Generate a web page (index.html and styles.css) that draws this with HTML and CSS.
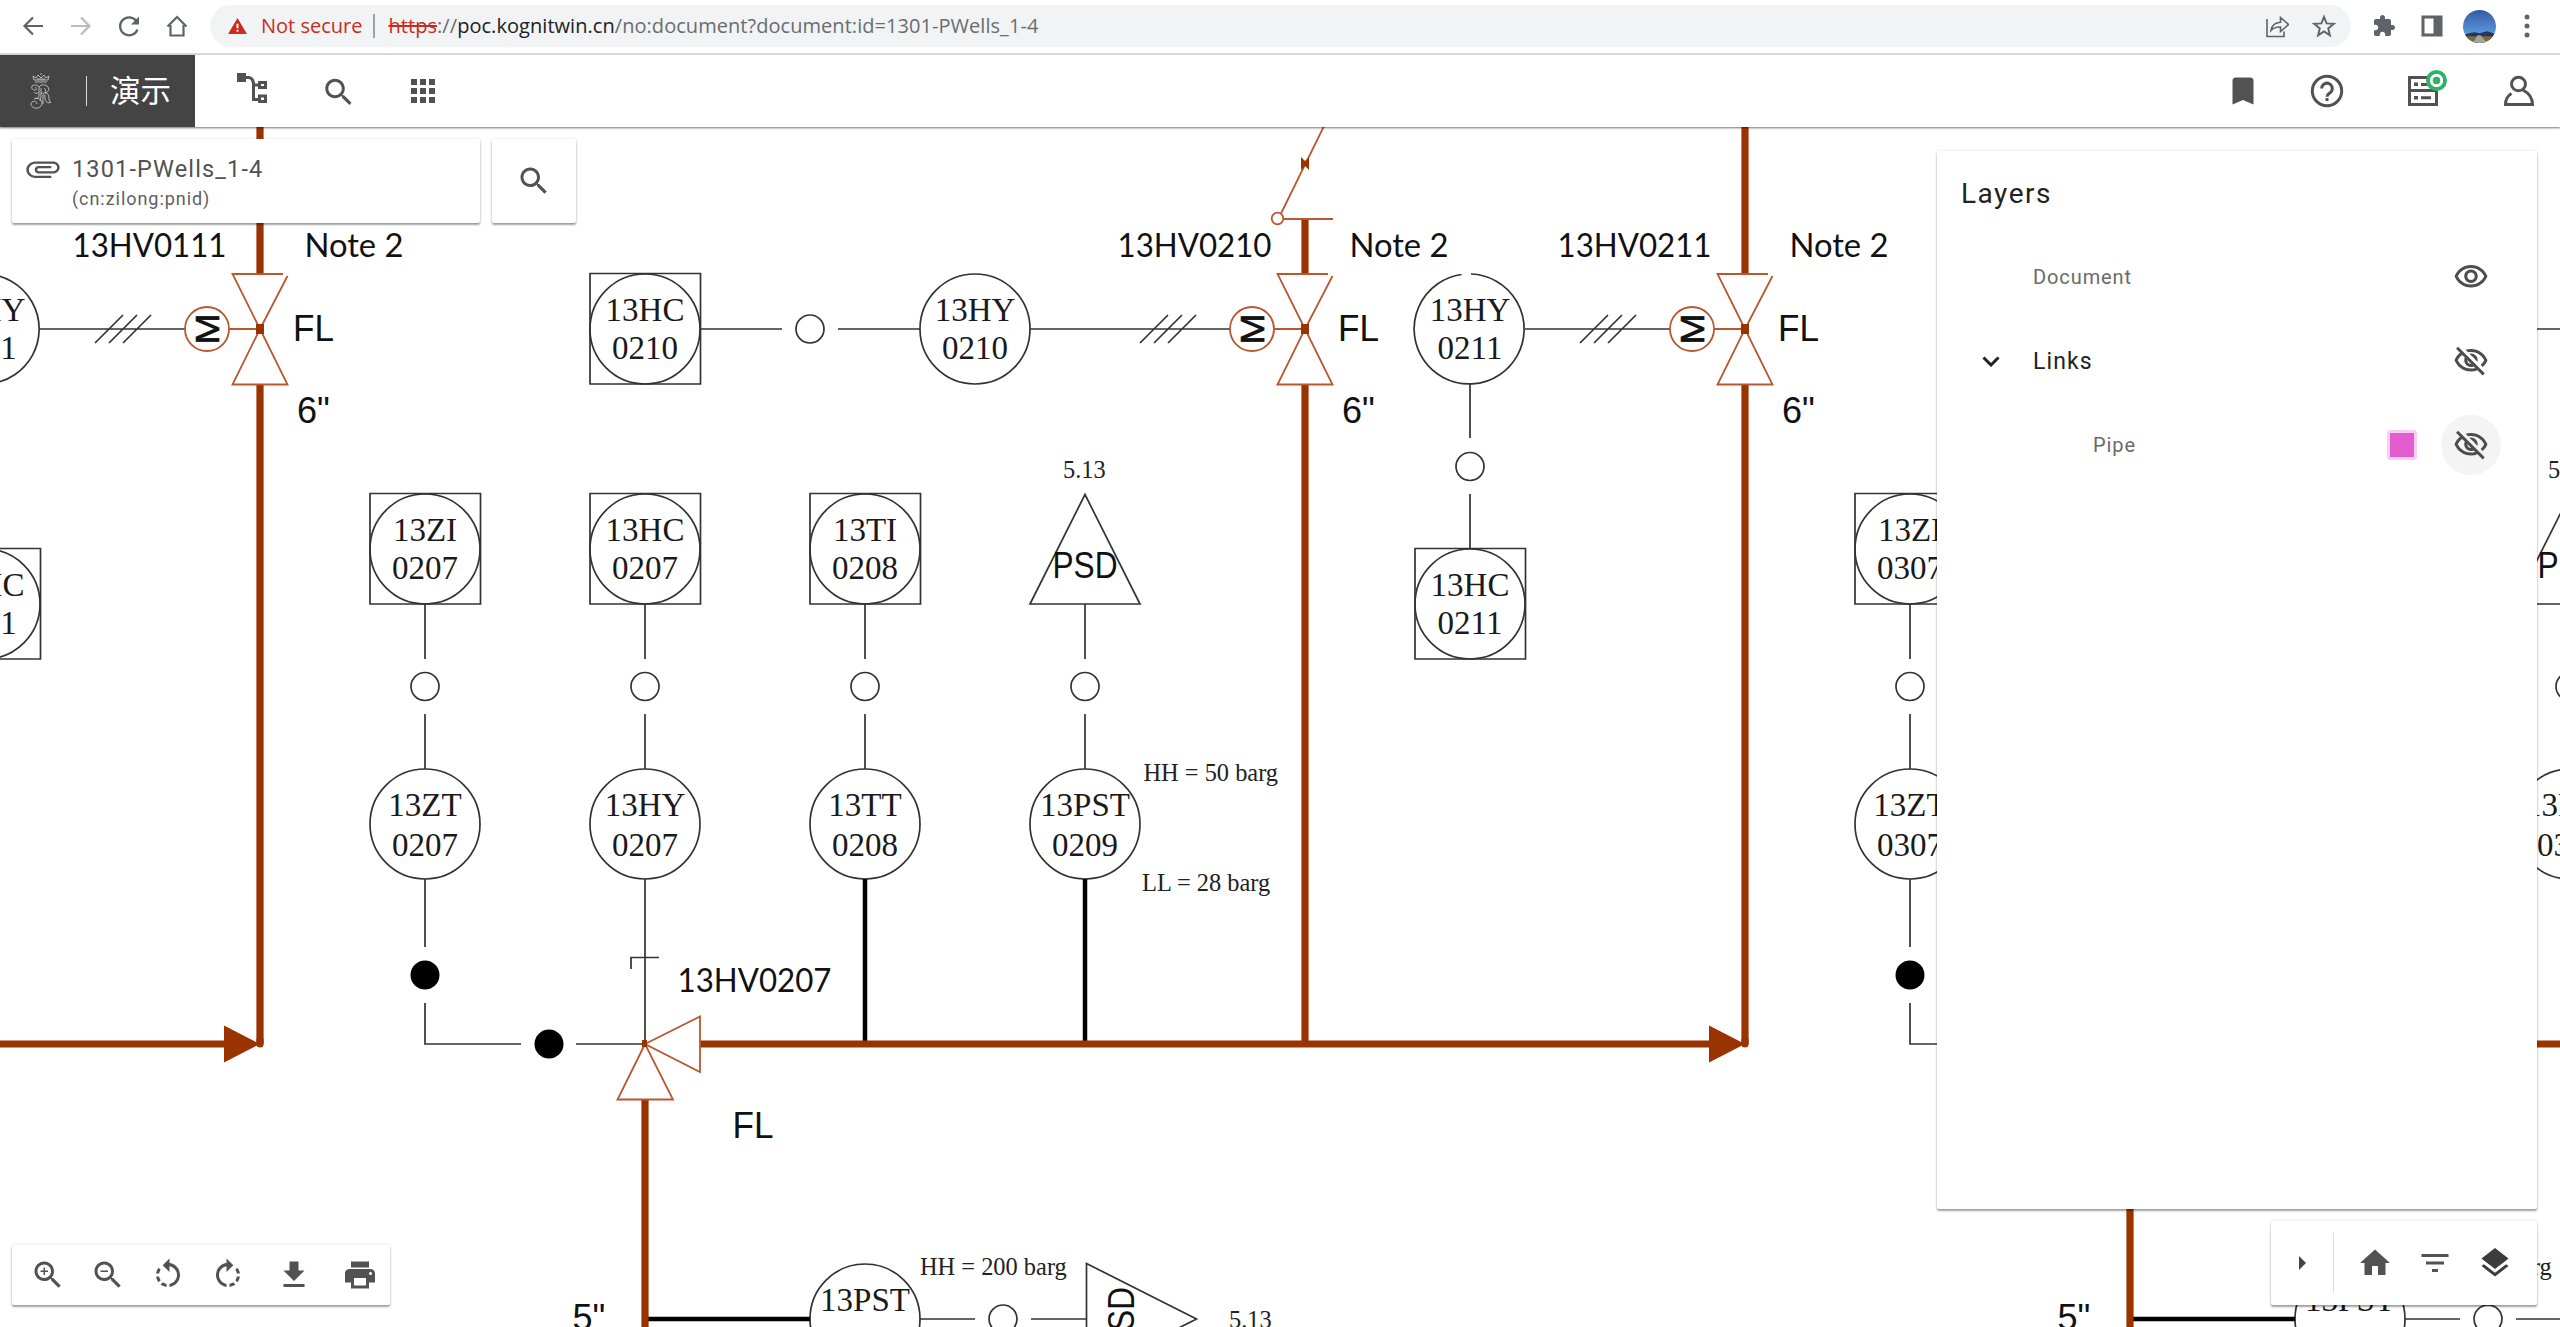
FILE: index.html
```html
<!DOCTYPE html>
<html lang="zh">
<head>
<meta charset="utf-8">
<title>1301-PWells_1-4</title>
<link rel="stylesheet" href="styles.css">
</head>
<body>
<div class="browser-bar">
  <div class="nav-buttons">
    <svg class="nav-icon" viewBox="0 0 24 24"><path d="M22 12H4M12 3.500L3.500 12l8.500 8.500" class="stroke"/></svg>
    <svg class="nav-icon faded" viewBox="0 0 24 24"><path d="M2 12h18M12 3.500l8.500 8.500-8.500 8.500" class="stroke"/></svg>
    <svg class="nav-icon" viewBox="0 0 24 24"><path d="M20.500 15.500A9 9 0 1 1 19 6.500" class="stroke"/><path d="M22 2.500V10.500H14z" class="solid"/></svg>
    <svg class="nav-icon" viewBox="0 0 24 24"><path d="M2.500 12.500L12 3l9.500 9.500M5.500 11V21.500h13V11" class="stroke"/></svg>
  </div>
  <div class="address">
    <svg class="warn-icon" viewBox="0 0 20 17"><path d="M10 0L20 17H0z"/><path d="M9 6h2v5H9zM9 12.500h2v2H9z" fill="#fff"/></svg>
    <span class="not-secure">Not secure</span>
    <span class="address-rule"></span>
    <span class="url"><s>https</s>://<b>poc.kognitwin.cn</b>/no:document?document:id=1301-PWells_1-4</span>
    <span class="address-actions">
      <svg class="nav-icon" viewBox="0 0 24 24"><path d="M2 5v17.500h17v-5M6 16.500c.8-5 4-8 9.500-8.300V3.500l8 7-8 7v-4.500c-4.500-.2-7 .7-9.500 3.500z" class="thin"/></svg>
      <svg class="nav-icon" viewBox="0 0 24 24"><path d="M12 2.800l2.600 6.600 7 .5-5.400 4.500 1.700 6.900-5.900-3.800-5.900 3.800 1.700-6.900-5.400-4.500 7-.5z" class="star"/></svg>
    </span>
  </div>
  <div class="ext-buttons">
    <svg class="nav-icon" viewBox="0 0 24 24"><path class="solid" d="M20.500 11H19V7c0-1.100-.9-2-2-2h-4V3.500C13 2.120 11.880 1 10.500 1S8 2.120 8 3.500V5H4c-1.100 0-1.990.9-1.990 2v3.800H3.500c1.490 0 2.700 1.210 2.700 2.700s-1.210 2.700-2.700 2.700H2V20c0 1.100.9 2 2 2h3.800v-1.500c0-1.490 1.210-2.700 2.700-2.700 1.490 0 2.700 1.210 2.700 2.700V22H17c1.100 0 2-.9 2-2v-4h1.500c1.380 0 2.500-1.120 2.500-2.500S21.880 11 20.500 11z"/></svg>
    <svg class="nav-icon" viewBox="0 0 24 24"><path class="solid" d="M1.500 1.500h21v21h-21zM4.500 4.500v15h9v-15z" fill-rule="evenodd"/></svg>
    <span class="avatar"><svg viewBox="0 0 34 34"><path d="M0 26l6-2 6-1 5 1 8-2 9 3v9H0z" fill="#28335e"/><path d="M0 27h34v7H0z" fill="#7d6b35"/><path d="M15 26h3l7 8H10z" fill="#a5a39b"/></svg></span>
    <svg class="nav-icon" viewBox="0 0 24 24"><g class="solid"><circle cx="12" cy="3" r="2.500"/><circle cx="12" cy="12" r="2.500"/><circle cx="12" cy="21" r="2.500"/></g></svg>
  </div>
</div>

<header class="app-bar">
  <div class="brand">
    <svg class="crest" viewBox="0 0 22 36"><path d="M4 7l-1-4 3 2 2-3 3 3 3-3 2 3 3-2-1 4zM5 9h12M11 0v2M7 6h8"/><path d="M2 13c3-2 6-1 7 1 2-3 7-3 9 0s0 5-3 6c3 0 4 2 4 6 0 2 1 3 2 3-3 2-6 0-6-4 0-3-1-5-4-5M9 14v9c0 2-2 3-4 2M2 13c-1 3 1 4 3 4s2-2 0-3M11 15v9l-1 4M14 15c2 1 2 4 0 5M4 26c4-2 8 1 8 4s-3 6-7 5-5-4-3-6 5 0 5 2M4 19c1 2 4 2 4 0M13 22v9"/></svg>
    <span class="brand-rule"></span>
    <span class="brand-name">演示</span>
  </div>
  <nav class="app-tools">
    <span class="tool"><svg class="tree" viewBox="0 0 30 30"><path d="M0 0h9v9H0z" fill="currentColor"/><path d="M9 4.500h3q4.500 1 4.500 7M16.500 9v17.500H22M16.500 12H22" class="line3"/><path d="M22.500 9.500h6v5h-6zM22.500 23h6v5.500h-6z" class="line3"/></svg></span>
    <span class="tool"><svg class="icon" viewBox="-1.200 -.8 24 24"><path d="M15.500 14h-.79l-.28-.27C15.410 12.590 16 11.110 16 9.500 16 5.910 13.090 3 9.500 3S3 5.910 3 9.500 5.910 16 9.500 16c1.610 0 3.090-.59 4.230-1.570l.27.280v.79l5 4.990L20.490 19l-4.990-5zm-6 0C7.010 14 5 11.990 5 9.500S7.010 5 9.500 5 14 7.010 14 9.500 11.990 14 9.500 14z"/></svg></span>
    <span class="tool"><svg class="icon" viewBox="0 0 24 24"><path d="M4 8h4V4H4v4zm6 12h4v-4h-4v4zm-6 0h4v-4H4v4zm0-6h4v-4H4v4zm6 0h4v-4h-4v4zm6-10v4h4V4h-4zm-6 4h4V4h-4v4zm6 6h4v-4h-4v4zm0 6h4v-4h-4v4z"/></svg></span>
  </nav>
  <nav class="app-actions">
    <svg class="icon" viewBox="0 0 24 24"><path d="M17 3H7c-1.100 0-1.990.9-1.990 2L5 21l7-3 7 3V5c0-1.100-.9-2-2-2z"/></svg>
    <svg class="icon" viewBox="0 0 36 36"><circle cx="18" cy="18" r="14.700" class="line3"/><path d="M12.700 15.500a5.300 5.300 0 1 1 8.500 4.200c-2 1.500-3.200 2-3.200 4" class="line3"/><path d="M16.500 25h3v3h-3z"/></svg>
    <span class="jobs">
      <svg class="icon" viewBox="0 0 36 36"><path d="M4.500 4.500h27v27h-27zM4.500 17.500h27" class="line3"/><path d="M9 9.500h4v3.500H9zM16 10h10v3H16zM9 23h4v3.500H9zM16 23.300h10v3H16z"/></svg>
      <span class="badge"></span>
    </span>
    <svg class="icon" viewBox="0 0 36 36"><ellipse cx="17.500" cy="11" rx="7" ry="6.700" class="line3"/><path d="M10.500 20.500Q4.500 24 4.500 31.500h27c0-6-3-11-9.500-14.500" class="line3"/></svg>
  </nav>
</header>

<main class="workspace">
  <svg class="drawing" viewBox="0 127 2560 1200">
    <defs>
      <g id="tag"><circle r="55"/></g>
      <g id="boxed-tag"><circle r="55"/><path d="M-55-55.500h110.500V55H-55z"/></g>
      <g id="motor-valve">
        <path class="wire" d="M-220 0H-75M-165 14l28-28M-151 14l28-28M-137 14l28-28"/>
        <g class="trim"><circle cx="-53" r="22"/><path d="M-31 0H0M23-55H-27.500L0 0l-27.500 55.500h55L0 0 27.500-53"/></g>
        <path class="joint" d="M-4-5h8v10h-8z"/>
        <text class="motor" transform="translate(-41 13) rotate(-90)" x="-2.500" y="0" textLength="31" lengthAdjust="spacingAndGlyphs">M</text>
      </g>
      <g id="well">
        <g class="wire">
          <use href="#boxed-tag" x="425" y="549"/><use href="#boxed-tag" x="645" y="549"/><use href="#boxed-tag" x="865" y="549"/>
          <use href="#boxed-tag" x="645" y="329"/><use href="#boxed-tag" x="1470" y="604"/>
          <use href="#tag" x="425" y="824"/><use href="#tag" x="645" y="824"/><use href="#tag" x="865" y="824"/><use href="#tag" x="1085" y="824"/>
          <use href="#tag" x="975" y="329"/><use href="#tag" x="865" y="1319"/>
          <path d="M1471 274a55 55 0 1 1-9.500.5"/>
          <circle cx="425" cy="686.500" r="14"/><circle cx="645" cy="686.500" r="14"/><circle cx="865" cy="686.500" r="14"/><circle cx="1085" cy="686.500" r="14"/>
          <circle cx="810" cy="329" r="14"/><circle cx="1470" cy="466.500" r="14"/><circle cx="1003" cy="1319" r="14"/>
          <path d="M1085 494.500l55 109.500h-110zM1086.500 1263.500l110 55.500-110 55.500z"/>
          <path d="M425 604v55M645 604v55M865 604v55M1085 604v55M425 714v55M645 714v55M865 714v55M1085 714v55"/>
          <path d="M700 329h82M838 329h82M1030 329h55M1470 384v54M1470 494v54.500M920 1319h55M1031 1319h55"/>
          <path d="M425 879v68M425 1003v41h96M576 1044h69V879M631 969v-11.500h28"/>
        </g>
        <circle cx="425" cy="975" r="14.500"/><circle cx="549" cy="1044" r="14.500"/>
        <path class="impulse" d="M865 879v163M1085 879v163M648 1319h162"/>
        <g class="pipe">
          <path d="M1305 219v55M1305 384v660M1745 100v174M1745 384v660M645 1099v260M700 1044h1010"/>
          <path class="cap" d="M1745 1040v4"/>
          <path class="arrow" d="M1709 1025.500l36 18.500-36 18.500z"/>
        </g>
        <g class="trim"><path d="M645 1044l55-27.500v55.500zL617.500 1099.500h55.500z"/><path d="M1284 219h49M1281 213.500L1326 122"/><circle cx="1277.500" cy="218.500" r="5.800"/></g>
        <path class="joint" d="M1301 157l4 4 4-4v13l-4-4-4 4zM642 1040h5v7h-5z"/>
        <use href="#motor-valve" x="1305" y="329"/><use href="#motor-valve" x="1745" y="329"/>
        <g class="pipe-label">
          <text x="1338" y="341" textLength="41" lengthAdjust="spacingAndGlyphs">FL</text><text x="1778" y="341" textLength="41" lengthAdjust="spacingAndGlyphs">FL</text><text x="732.500" y="1137.500" textLength="41" lengthAdjust="spacingAndGlyphs">FL</text>
          <text x="1342" y="423">6"</text><text x="1782" y="423">6"</text><text x="572.500" y="1329.500">5"</text>
          <text x="1052.500" y="578" textLength="65" lengthAdjust="spacingAndGlyphs">PSD</text>
          <text transform="translate(1134 1352) rotate(-90)" textLength="65" lengthAdjust="spacingAndGlyphs">PSD</text>
        </g>
        <g class="note">
          <text x="1063" y="478">5.13</text><text x="1229" y="1328">5.13</text>
          <text x="1143.500" y="781">HH = 50 barg</text><text x="1142" y="891">LL = 28 barg</text><text x="920" y="1275">HH = 200 barg</text>
        </g>
        <g class="valve-label">
          <text x="1349.500" y="256.500" textLength="99" lengthAdjust="spacingAndGlyphs">Note 2</text>
          <text x="1789.500" y="256.500" textLength="99" lengthAdjust="spacingAndGlyphs">Note 2</text>
        </g>
      </g>
    </defs>
    <use href="#well" x="-1485"/>
    <use href="#well"/>
    <use href="#well" x="1485"/>
    <g class="valve-label">
      <text x="72.500" y="256.500" textLength="154" lengthAdjust="spacingAndGlyphs">13HV0111</text>
      <text x="1117.500" y="256.500" textLength="154" lengthAdjust="spacingAndGlyphs">13HV0210</text>
      <text x="1557.500" y="256.500" textLength="154" lengthAdjust="spacingAndGlyphs">13HV0211</text>
      <text x="677.500" y="991.500" textLength="154" lengthAdjust="spacingAndGlyphs">13HV0207</text>
    </g>
    <g class="tag-label">
      <text x="-15" y="321">13HY</text><text x="-15" y="359">0111</text>
      <text x="-15" y="596">13HC</text><text x="-15" y="634">0111</text>
      <text x="645" y="321">13HC</text><text x="645" y="359">0210</text>
      <text x="975" y="321">13HY</text><text x="975" y="359">0210</text>
      <text x="1470" y="321">13HY</text><text x="1470" y="359">0211</text>
      <text x="1470" y="596">13HC</text><text x="1470" y="634">0211</text>
      <text x="425" y="541">13ZI</text><text x="425" y="579">0207</text>
      <text x="645" y="541">13HC</text><text x="645" y="579">0207</text>
      <text x="865" y="541">13TI</text><text x="865" y="579">0208</text>
      <text x="425" y="816">13ZT</text><text x="425" y="855.500">0207</text>
      <text x="645" y="816">13HY</text><text x="645" y="855.500">0207</text>
      <text x="865" y="816">13TT</text><text x="865" y="855.500">0208</text>
      <text x="1085" y="816">13PST</text><text x="1085" y="855.500">0209</text>
      <text x="865" y="1310.500">13PST</text><text x="865" y="1349">0204</text>
      <text x="1910" y="541">13ZI</text><text x="1910" y="579">0307</text>
      <text x="1910" y="816">13ZT</text><text x="1910" y="855.500">0307</text>
      <text x="2570" y="816">13PST</text><text x="2570" y="855.500">0309</text>
      <text x="2350" y="1310.500">13PST</text><text x="2350" y="1349">0304</text>
    </g>
  </svg>

  <div class="top-left">
    <section class="card doc-card">
      <svg class="clip" viewBox="0 0 24 24" preserveAspectRatio="none"><path d="M2 12.500C2 9.460 4.460 7 7.500 7H18c2.210 0 4 1.790 4 4s-1.790 4-4 4H9.500C8.120 15 7 13.880 7 12.500S8.120 10 9.500 10H17v1.500H9.410c-1.200 0-1.200 2 0 2H18c1.400 0 2.500-1.100 2.500-2.500s-1.100-2.500-2.500-2.500H7.500C5.300 8.500 3.500 10.300 3.500 12.500S5.300 16.500 7.500 16.500H17V18H7.500C4.460 18 2 15.540 2 12.500z"/></svg>
      <div class="doc-text"><div class="doc-title">1301-PWells_1-4</div><div class="doc-source">(cn:zilong:pnid)</div></div>
    </section>
    <section class="card search-card"><svg class="icon" viewBox="0 0 24 24"><path d="M15.500 14h-.79l-.28-.27C15.410 12.590 16 11.110 16 9.500 16 5.910 13.090 3 9.500 3S3 5.910 3 9.500 5.910 16 9.500 16c1.610 0 3.090-.59 4.230-1.570l.27.280v.79l5 4.990L20.490 19l-4.990-5zm-6 0C7.010 14 5 11.990 5 9.500S7.010 5 9.500 5 14 7.010 14 9.500 11.990 14 9.500 14z"/></svg></section>
  </div>

  <div class="right-column">
    <aside class="card layers">
      <h2>Layers</h2>
      <div class="layer sub"><span class="toggle"></span><span class="name">Document</span>
        <span class="eye"><svg class="icon" viewBox="0 0 24 24"><path d="M12 6c3.790 0 7.170 2.130 8.820 5.500C19.170 14.870 15.790 17 12 17s-7.170-2.130-8.820-5.500C4.830 8.130 8.210 6 12 6m0-2C7 4 2.730 7.110 1 11.500 2.730 15.890 7 19 12 19s9.270-3.110 11-7.500C21.270 7.110 17 4 12 4zm0 5c1.380 0 2.500 1.120 2.500 2.500S13.380 14 12 14s-2.500-1.120-2.500-2.500S10.620 9 12 9m0-2c-2.480 0-4.500 2.020-4.500 4.500S9.520 16 12 16s4.500-2.020 4.500-4.500S14.480 7 12 7z"/></svg></span></div>
      <div class="layer"><span class="toggle"><svg class="chevron" viewBox="0 0 18 11"><path d="M1.500 1.500L9 9l7.500-7.500"/></svg></span><span class="name">Links</span>
        <span class="eye"><svg class="icon" viewBox="0 0 24 24"><path d="M12 6c3.790 0 7.170 2.130 8.820 5.500-.59 1.220-1.420 2.270-2.410 3.120l1.410 1.410c1.390-1.230 2.490-2.770 3.180-4.530C21.270 7.110 17 4 12 4c-1.270 0-2.490.2-3.640.57l1.650 1.650C10.660 6.090 11.320 6 12 6zm-1.070 1.140L13 9.210c.57.250 1.030.71 1.280 1.280l2.070 2.070c.08-.34.140-.7.140-1.070C16.500 9.010 14.480 7 12 7c-.37 0-.72.050-1.070.14zM2.010 3.870l2.680 2.680C3.060 7.830 1.770 9.530 1 11.500 2.730 15.890 7 19 12 19c1.520 0 2.980-.29 4.320-.82l3.420 3.420 1.410-1.410L3.420 2.450 2.010 3.870zm7.500 7.500l2.610 2.610c-.04.010-.08.020-.12.020-1.380 0-2.500-1.120-2.500-2.500 0-.05.010-.08.010-.13zm-3.400-3.400l1.750 1.750c-.23.550-.36 1.150-.36 1.780 0 2.480 2.020 4.500 4.500 4.500.63 0 1.230-.13 1.770-.36l.98.980c-.88.240-1.800.38-2.750.38-3.790 0-7.170-2.130-8.820-5.500.7-1.430 1.720-2.610 2.930-3.530z"/></svg></span></div>
      <div class="layer sub nested"><span class="toggle"></span><span class="name">Pipe</span><span class="swatch"></span>
        <span class="eye hovered"><svg class="icon" viewBox="0 0 24 24"><path d="M12 6c3.790 0 7.170 2.130 8.820 5.500-.59 1.220-1.420 2.270-2.410 3.120l1.410 1.410c1.390-1.230 2.490-2.770 3.180-4.530C21.270 7.110 17 4 12 4c-1.270 0-2.490.2-3.640.57l1.650 1.650C10.660 6.090 11.320 6 12 6zm-1.070 1.140L13 9.210c.57.250 1.030.71 1.280 1.280l2.070 2.070c.08-.34.140-.7.140-1.070C16.500 9.010 14.480 7 12 7c-.37 0-.72.050-1.070.14zM2.010 3.870l2.680 2.680C3.060 7.830 1.770 9.530 1 11.500 2.730 15.890 7 19 12 19c1.520 0 2.980-.29 4.320-.82l3.420 3.420 1.410-1.410L3.420 2.450 2.010 3.870zm7.500 7.500l2.610 2.610c-.04.010-.08.020-.12.020-1.380 0-2.500-1.120-2.500-2.500 0-.05.010-.08.010-.13zm-3.400-3.400l1.750 1.750c-.23.550-.36 1.150-.36 1.780 0 2.480 2.020 4.500 4.500 4.500.63 0 1.230-.13 1.770-.36l.98.980c-.88.240-1.800.38-2.750.38-3.790 0-7.170-2.130-8.820-5.500.7-1.430 1.720-2.610 2.930-3.530z"/></svg></span></div>
    </aside>
    <section class="card view-bar">
      <span class="collapse"><svg viewBox="0 0 7 14"><path d="M0 0l7 7-7 7z"/></svg></span>
      <span class="view-btn"><svg class="icon" viewBox="0 0 24 24"><path d="M10 20v-6h4v6h5v-8h3L12 3 2 12h3v8z"/></svg></span>
      <span class="view-btn"><svg class="icon" viewBox="0 0 24 24"><path d="M10 18h4v-2h-4v2zM3 6v2h18V6H3zm3 7h12v-2H6v2z"/></svg></span>
      <span class="view-btn active"><svg class="icon" viewBox="0 0 24 24"><path d="M11.990 18.540l-7.370-5.730L3 14.070l9 7 9-7-1.630-1.270-7.380 5.740zM12 16l7.360-5.730L21 9l-9-7-9 7 1.630 1.270L12 16z"/></svg></span>
    </section>
  </div>

  <section class="card page-bar">
    <span><svg class="icon" viewBox="0 0 24 24"><path d="M15.500 14h-.79l-.28-.27C15.410 12.590 16 11.110 16 9.500 16 5.910 13.090 3 9.500 3S3 5.910 3 9.500 5.910 16 9.500 16c1.610 0 3.090-.59 4.230-1.570l.27.280v.79l5 4.990L20.490 19l-4.990-5zm-6 0C7.010 14 5 11.990 5 9.500S7.010 5 9.500 5 14 7.010 14 9.500 11.990 14 9.500 14zM10 7H9v2H7v1h2v2h1v-2h2V9h-2V7z"/></svg></span>
    <span><svg class="icon" viewBox="0 0 24 24"><path d="M15.500 14h-.79l-.28-.27C15.410 12.590 16 11.110 16 9.500 16 5.910 13.090 3 9.500 3S3 5.910 3 9.500 5.910 16 9.500 16c1.610 0 3.090-.59 4.230-1.570l.27.280v.79l5 4.990L20.490 19l-4.990-5zm-6 0C7.010 14 5 11.990 5 9.500S7.010 5 9.500 5 14 7.010 14 9.500 11.990 14 9.500 14zM7 9h5v1H7z"/></svg></span>
    <span><svg class="icon" viewBox="0 0 24 24"><path d="M7.110 8.530L5.700 7.110C4.800 8.270 4.240 9.610 4.070 11h2.020c.14-.87.490-1.720 1.020-2.470zM6.090 13H4.070c.17 1.390.72 2.730 1.620 3.890l1.410-1.420c-.52-.75-.87-1.590-1.010-2.470zm1.010 5.320c1.160.9 2.510 1.440 3.900 1.610V17.900c-.87-.15-1.710-.49-2.460-1.030L7.100 18.320zM13 4.070V1L8.450 5.550 13 10V6.090c2.840.48 5 2.940 5 5.910s-2.160 5.430-5 5.910v2.020c3.950-.49 7-3.850 7-7.930s-3.050-7.440-7-7.930z"/></svg></span>
    <span><svg class="icon flip" viewBox="0 0 24 24"><path d="M7.110 8.530L5.700 7.110C4.800 8.270 4.240 9.610 4.070 11h2.020c.14-.87.490-1.720 1.020-2.470zM6.090 13H4.070c.17 1.390.72 2.730 1.620 3.890l1.410-1.420c-.52-.75-.87-1.590-1.010-2.470zm1.010 5.320c1.160.9 2.510 1.440 3.900 1.610V17.900c-.87-.15-1.710-.49-2.460-1.030L7.100 18.320zM13 4.070V1L8.450 5.550 13 10V6.090c2.840.48 5 2.940 5 5.910s-2.160 5.430-5 5.910v2.020c3.950-.49 7-3.850 7-7.930s-3.050-7.440-7-7.930z"/></svg></span>
    <span class="spaced"><svg class="icon" viewBox="0 0 24 24"><path d="M5 20h14v-2H5v2zM19 9h-4V3H9v6H5l7 7 7-7z"/></svg></span>
    <span class="spaced"><svg class="icon" viewBox="0 0 24 24"><path d="M19 8H5c-1.660 0-3 1.340-3 3v6h4v4h12v-4h4v-6c0-1.660-1.340-3-3-3zm-3 11H8v-5h8v5zm3-7c-.55 0-1-.45-1-1s.45-1 1-1 1 .45 1 1-.45 1-1 1zm-1-9H6v4h12V3z"/></svg></span>
  </section>
</main>
</body>
</html>
```
FILE: styles.css
```css
* { box-sizing: border-box; }
body {
  margin: 0;
  width: 2560px;
  height: 1327px;
  overflow: hidden;
  display: flex;
  flex-direction: column;
  background: #fff;
  color: #525252;
  font-family: Roboto, "Noto Sans CJK SC", sans-serif;
}
svg { display: block; flex: none; }

/* browser toolbar */
.browser-bar {
  flex: none;
  height: 55px;
  padding: 5px 0 6px;
  border-bottom: 2px solid #dadbdd;
  display: flex;
  color: #5f6368;
}
.nav-icon { width: 24px; height: 24px; }
.stroke { fill: none; stroke: currentColor; stroke-width: 2.2; }
.thin { fill: none; stroke: currentColor; stroke-width: 1.6; }
.star { fill: none; stroke: currentColor; stroke-width: 1.9; }
.solid { fill: currentColor; }
.nav-buttons { width: 210px; height: 42px; padding-left: 21px; display: flex; gap: 24px; align-items: center; }
.faded { color: #b9bbbe; }
.address {
  width: 2141px;
  height: 42px;
  border-radius: 21px;
  background: #f1f3f4;
  display: flex;
  align-items: center;
  padding: 0 15px 0 18px;
  font: 20px/42px "Open Sans", "Noto Sans", sans-serif;
  white-space: nowrap;
}
.warn-icon { width: 19px; height: 16px; fill: #c92c22; margin-right: 14px; }
.not-secure { width: 112px; color: #c92c22; }
.address-rule { width: 2px; height: 24px; background: #a0a4a8; margin-right: 13.5px; }
.url { color: #6a6d70; letter-spacing: .05px; }
.url b { font-weight: 400; color: #202124; }
.url s { color: #c92c22; }
.address-actions { margin-left: auto; display: flex; gap: 23px; }
.ext-buttons { height: 42px; padding-left: 21px; display: flex; align-items: center; }
.ext-buttons .nav-icon + .nav-icon { margin-left: 24px; }
.avatar { width: 33px; height: 33px; margin: 0 19px; border-radius: 50%; overflow: hidden; background: linear-gradient(#3559a3, #5b9be0 75%); }

/* application header */
.app-bar {
  position: relative;
  z-index: 2;
  flex: none;
  height: 72px;
  display: flex;
  background: #fff;
  box-shadow: 0 1px 2px rgba(0, 0, 0, .55);
}
.icon { width: 36px; height: 36px; fill: currentColor; }
.line3 { fill: none; stroke: currentColor; stroke-width: 3; }
.brand { width: 195px; background: #444; display: flex; align-items: center; padding-left: 30px; color: #fff; }
.crest { width: 22px; height: 36px; fill: none; stroke: #d5d5d5; stroke-width: .8; }
.brand-rule { width: 1px; height: 30px; margin: 0 23px 0 34px; background: #ddd; }
.brand-name { font: 30.5px/68px "Noto Sans CJK SC", sans-serif; height: 72px; }
.app-tools { display: flex; padding-left: 14px; }
.tool { width: 85.5px; display: flex; align-items: center; justify-content: center; }
.tree { width: 30px; height: 30px; margin-bottom: 6px; }
.app-actions { margin-left: auto; display: flex; align-items: center; padding-right: 23px; }
.app-actions > :nth-child(2) { margin-left: 48px; }
.app-actions > :nth-child(3) { margin-left: 60px; }
.app-actions > :nth-child(4) { margin-left: 60px; }
.jobs { position: relative; }
.badge {
  position: absolute;
  right: -6px;
  top: -3px;
  width: 21px;
  height: 21px;
  border-radius: 50%;
  background: radial-gradient(circle, #2fb268 3.500px, #fff 4.200px 6.200px, #2fb268 7px);
}

/* drawing */
.workspace { position: relative; height: 1200px; }
.drawing { width: 2560px; height: 1200px; }
.wire { fill: none; stroke: #333; stroke-width: 1.7; }
.trim { fill: none; stroke: #b9572e; stroke-width: 1.8; }
.joint { fill: #993300; }
.impulse { fill: none; stroke: #000; stroke-width: 4.5; }
.pipe { fill: none; stroke: #993300; stroke-width: 7.2; }
.pipe .cap { stroke-linecap: round; }
.pipe .arrow { fill: #993300; stroke: none; }
.pipe-label { font: 36px "Liberation Sans", sans-serif; fill: #111; }
.motor { font: 33px "Liberation Sans", sans-serif; fill: #111; stroke: #111; stroke-width: .6; }
.note { font: 24.4px "Liberation Serif", serif; fill: #222; }
.valve-label { font: 32px Lato, sans-serif; fill: #111; }
.tag-label { font: 33px "Liberation Serif", serif; fill: #1a1a1a; text-anchor: middle; }

/* floating cards */
.card { background: #fff; border-radius: 2px; box-shadow: 0 2px 2px rgba(0, 0, 0, .35), 0 0 3px rgba(0, 0, 0, .14); }
.top-left { position: absolute; left: 12px; top: 12px; display: flex; gap: 12px; }
.doc-card { width: 468px; height: 84px; display: flex; padding: 12px 11px; }
.clip { width: 40px; height: 36px; fill: currentColor; }
.doc-text { padding-left: 9px; }
.doc-title { font-size: 23.5px; line-height: 37px; letter-spacing: 1.15px; }
.doc-source { font-size: 18px; line-height: 22px; letter-spacing: .95px; color: #606060; }
.search-card { width: 84px; height: 84px; display: grid; place-items: center; }
.right-column { position: absolute; right: 23px; top: 24px; width: 600px; display: flex; flex-direction: column; align-items: flex-end; gap: 12px; }
.layers { width: 600px; height: 1058px; padding-top: 25px; }
.layers h2 { margin: 0; height: 59px; padding-left: 24px; font-size: 28px; line-height: 36px; font-weight: 400; letter-spacing: 1.5px; color: #222; }
.layer { height: 84px; display: flex; align-items: center; padding: 0 36px 0 24px; font-size: 23px; letter-spacing: 1.1px; color: #222; }
.layer .name { flex: 1; }
.layer.sub { font-size: 20px; letter-spacing: .9px; color: #6a6a6a; }
.toggle { width: 72px; padding-left: 21px; color: #222; }
.nested .toggle { width: 132px; }
.chevron { width: 18px; height: 11px; fill: none; stroke: currentColor; stroke-width: 3; }
.eye { width: 60px; height: 60px; border-radius: 50%; display: grid; place-items: center; color: #4d4d4d; }
.eye.hovered { background: #f4f4f4; }
.swatch { width: 30px; height: 30px; margin-right: 24px; border: 3px solid #f7d0f1; border-radius: 3px; background: #e55bd0; }
.view-bar { width: 266px; height: 84px; display: flex; align-items: center; padding-right: 12px; }
.collapse { width: 63px; height: 60px; border-right: 1px solid #ddd; display: flex; align-items: center; padding-left: 28px; margin-right: auto; }
.collapse svg { width: 7px; height: 14px; fill: #444; }
.view-btn { width: 60px; display: grid; place-items: center; }
.view-btn.active { color: #3c3c3c; }
.page-bar { position: absolute; left: 12px; bottom: 22px; width: 378px; height: 60px; padding-left: 6px; display: flex; }
.page-bar span { width: 60px; display: grid; place-items: center; }
.page-bar .spaced { margin-left: 6px; }
.flip { transform: scaleX(-1); }
```
